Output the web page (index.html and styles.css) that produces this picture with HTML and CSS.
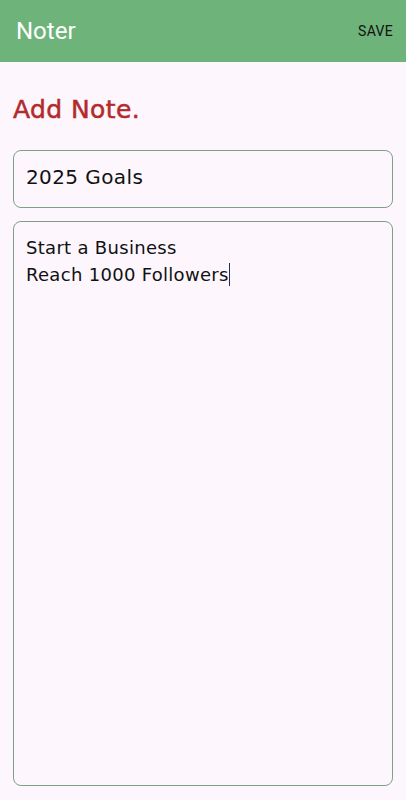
FILE: index.html
```html
<!DOCTYPE html>
<html>
<head>
	<title>Noter</title>
	<meta name="viewport" content="width=device-width,initial-scale=1">
	<link rel="stylesheet" href="styles.css">
</head>
<body>

	<div class="app">
		<div class="toolbar">
			<h1>Noter</h1>
			<button class="save">SAVE</button>
		</div>
		<div class="content">
			<h2 class="heading">Add Note.</h2>
			<div class="field title-field">2025 Goals</div>
			<div class="field body-field">
				<div>Start a Business</div>
				<div>Reach 1000 Followers<span class="caret"></span></div>
			</div>
		</div>
	</div>

</body>
</html>
```

FILE: styles.css
```css
*{
	box-sizing: border-box;
	padding: 0;
	margin: 0;
}

body{
	background-color: #fdf6fd;
	font-family: "DejaVu Sans", sans-serif;
}

.app{
	width: 100vw;
	height: 100vh;
	display: flex;
	flex-direction: column;
}

.toolbar{
	height: 62px;
	background-color: #6db37a;
	display: flex;
	align-items: center;
	justify-content: space-between;
	padding: 0 13px 0 16px;
}
.toolbar h1{
	font-family: Roboto, sans-serif;
	font-weight: 400;
	font-size: 24px;
	color: #fff;
}
.toolbar .save{
	font-family: Roboto, sans-serif;
	font-weight: 400;
	font-size: 14px;
	color: #111;
	background: none;
	border: none;
	letter-spacing: .3px;
}

.content{
	flex: 1;
	display: flex;
	flex-direction: column;
	padding: 33px 13px 14px 13px;
}

.heading{
	color: #b22a2a;
	font-size: 25px;
	font-weight: 400;
	line-height: 30px;
	letter-spacing: .4px;
	-webkit-text-stroke: .5px #b22a2a;
	margin-bottom: 25px;
}

.field{
	border: 1px solid #7f9f86;
	border-radius: 8px;
	color: #111;
	padding: 0 12px;
}
.title-field{
	height: 58px;
	display: flex;
	align-items: center;
	padding-bottom: 4px;
	font-size: 20px;
	letter-spacing: .4px;
	margin-bottom: 13px;
}
.body-field{
	flex: 1;
	padding-top: 12px;
	font-size: 18px;
	letter-spacing: .3px;
	line-height: 27px;
}
.caret{
	display: inline-block;
	width: 1.5px;
	height: 23px;
	background: #2a2a55;
	vertical-align: -5px;
}
```
